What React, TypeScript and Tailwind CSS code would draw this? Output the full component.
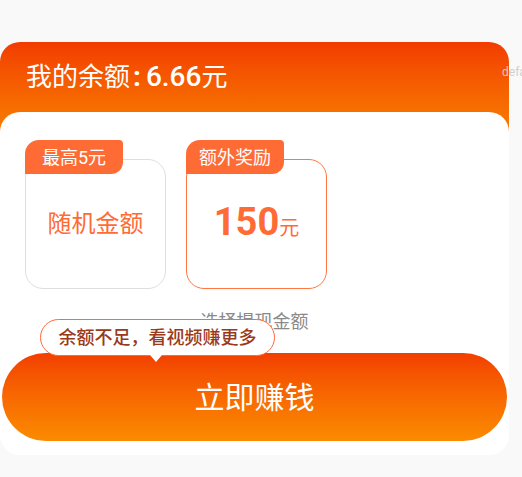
import React from 'react';

const font = { fontFamily: 'Roboto, "Noto Sans CJK SC", sans-serif' };

function Option({
  tag,
  active,
  children,
}: {
  tag: string;
  active?: boolean;
  children: React.ReactNode;
}) {
  return (
    <div
      className={`relative w-[141px] h-[130px] rounded-[18px] border flex items-center justify-center ${
        active ? 'border-[#ff7640]' : 'border-[#dedede]'
      }`}
    >
      {/* tag badge */}
      <div className="absolute -top-[20px] -left-px w-[98px] h-[34px] rounded-tl-[14px] rounded-tr-[4px] rounded-br-[12px] bg-[#ff6b35] text-white text-[18px] flex items-center justify-center">
        {tag}
      </div>
      {children}
    </div>
  );
}

export default function App() {
  return (
    <div className="relative w-[522px] h-[477px] overflow-hidden bg-[#f9f9f9]" style={font}>
      <div className="relative w-[509px] mt-[42px]">
        {/* Header */}
        <div className="h-[90px] rounded-t-[20px] bg-gradient-to-b from-[#f23b00] to-[#f87c00] pl-[26px] pt-[17px]">
          <div className="flex items-baseline text-white text-[26px] leading-[36px]">
            <span>我的余额</span>
            <span className="font-bold text-[28px] ml-[3px] mr-[5px]">:</span>
            <span className="font-medium text-[28px]">6.66</span>
            <span>元</span>
          </div>
        </div>
        <div className="absolute left-[502px] top-[21px] text-[12px] text-[#cfcfcf]">default</div>

        {/* Body */}
        <div className="relative -mt-[20px] rounded-[20px] bg-white pt-[47px] pb-[14px]">
          <div className="flex gap-[20px] pl-[25px]">
            <Option tag="最高5元">
              <span className="text-[24px] text-[#ff6b35]">随机金额</span>
            </Option>
            <Option tag="额外奖励" active>
              <div className="flex items-baseline text-[#ff6b35] -mt-[3px]">
                <span className="text-[38px] font-bold">150</span>
                <span className="text-[20px]">元</span>
              </div>
            </Option>
          </div>

          <div className="mt-[21px] text-center text-[18px] leading-[24px] text-[#8a8a8a]">选择提现金额</div>

          <div className="relative mt-[19px] px-[2px]">
            {/* Tooltip */}
            <div className="absolute z-10 left-[40px] -top-[34px] w-[235px] h-[37px] rounded-full bg-white border-[1.5px] border-[#ff6a3a] flex items-center justify-center text-[18px] font-medium text-[#9a3a1c]">
              余额不足，看视频赚更多
              <div className="absolute left-[109px] -bottom-[7px] w-0 h-0 border-l-[6px] border-r-[6px] border-t-[7px] border-l-transparent border-r-transparent border-t-white" />
            </div>
            <button className="w-full h-[88px] rounded-full bg-gradient-to-b from-[#f23e00] to-[#fb8b00] text-white text-[30px] flex items-center justify-center">
              立即赚钱
            </button>
          </div>
        </div>
      </div>
    </div>
  );
}
